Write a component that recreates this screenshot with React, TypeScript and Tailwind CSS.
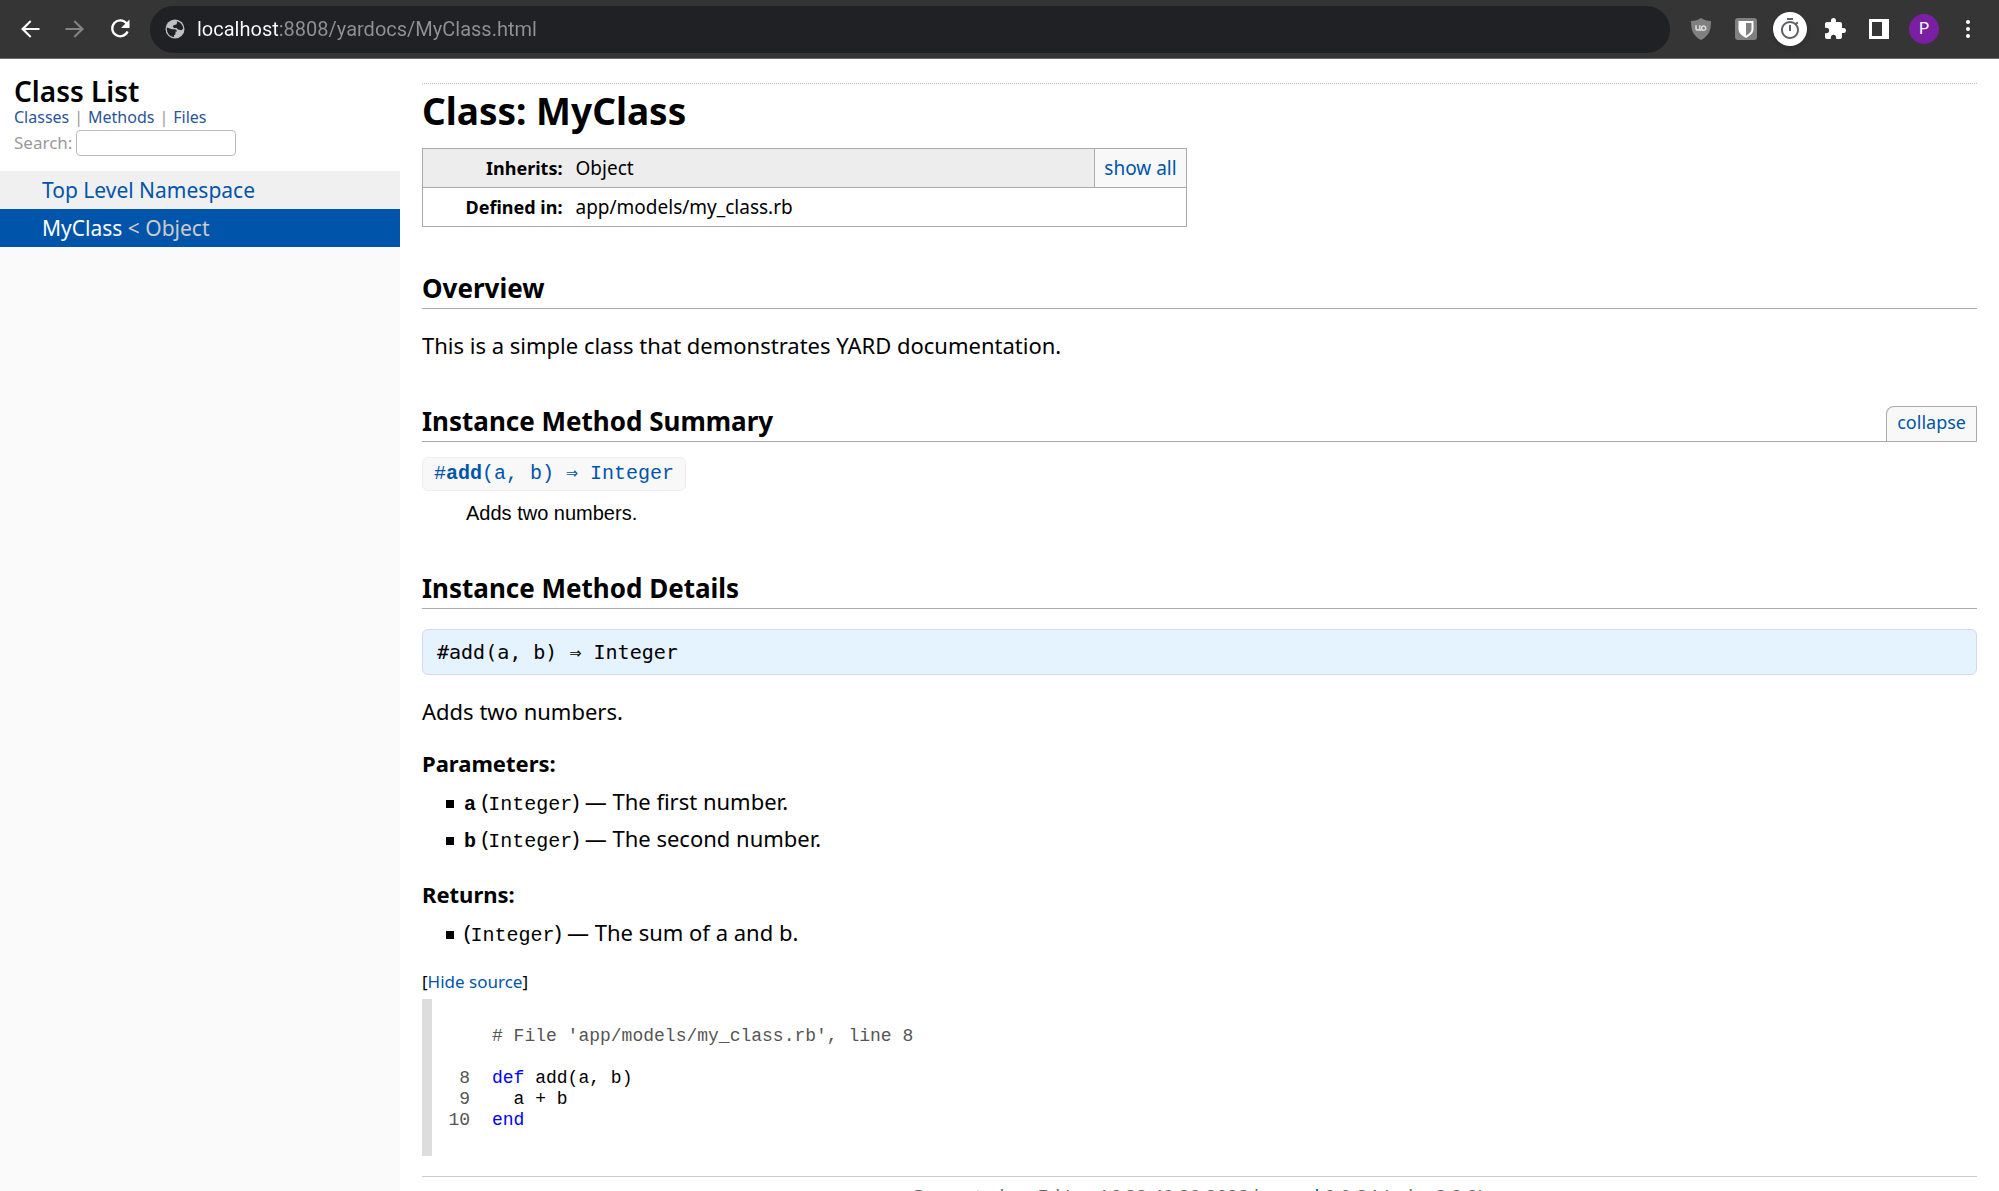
import type { ReactNode } from "react";

const classes = [
  { name: "Top Level Namespace", parent: "", active: false },
  { name: "MyClass", parent: "Object", active: true },
];

const source = [
  { line: "", code: "# File 'app/models/my_class.rb', line 8", kind: "comment" },
  { line: "", code: "", kind: "plain" },
  { line: "8", code: "add(a, b)", keyword: "def ", kind: "plain" },
  { line: "9", code: "  a + b", kind: "plain" },
  { line: "10", code: "", keyword: "end", kind: "plain" },
];

function UblockIcon() {
  return (
    <svg width="20" height="22" viewBox="0 0 20 22" fill="none">
      <path
        d="M10 0c3 2 6 3 10 3 0 9-2 15-10 19C2 18 0 12 0 3c4 0 7-1 10-3z"
        fill="#808080"
      />
      <path
        d="M5 7.200v3a1.900 1.900 0 0 0 3.800 0v-3M8.800 12.300h1.400M14.800 10.200a2.100 2.100 0 1 1-4.200 0 2.100 2.100 0 0 1 4.200 0z"
        stroke="#dedede"
        strokeWidth="1.500"
      />
    </svg>
  );
}

function BitwardenIcon() {
  return (
    <svg width="22" height="22" viewBox="0 0 22 22">
      <rect width="22" height="22" rx="3" fill="#808080" />
      <path d="M3.500 3h15v8c0 4-3 6.500-7.500 9-4.500-2.500-7.500-5-7.500-9z" fill="#fff" />
      <path d="M11 5h5.500v6c0 2.800-2 4.500-5.500 6.700z" fill="#808080" />
    </svg>
  );
}

function TimerIcon() {
  return (
    <svg width="24" height="24" viewBox="0 0 24 24" fill="#5f6368">
      <path d="M15 1H9v2h6V1zm-4 13h2V8h-2v6zm8.030-6.610 1.420-1.420c-.430-.510-.900-.990-1.410-1.410l-1.420 1.420C16.070 4.740 14.120 4 12 4c-4.970 0-9 4.030-9 9s4.020 9 9 9 9-4.030 9-9c0-2.120-.740-4.070-1.970-5.610zM12 20c-3.870 0-7-3.130-7-7s3.130-7 7-7 7 3.130 7 7-3.130 7-7 7z" />
    </svg>
  );
}

function PuzzleIcon() {
  return (
    <svg width="24" height="24" viewBox="0 0 24 24" fill="#fff">
      <path d="M20.500 11H19V7c0-1.100-.900-2-2-2h-4V3.500a2.500 2.500 0 0 0-5 0V5H4c-1.100 0-1.990.900-1.990 2v3.800H3.500c1.490 0 2.700 1.210 2.700 2.700s-1.210 2.700-2.700 2.700H2V20c0 1.100.900 2 2 2h3.800v-1.500c0-1.490 1.210-2.700 2.700-2.700s2.700 1.210 2.700 2.700V22H17c1.100 0 2-.900 2-2v-4h1.500a2.500 2.500 0 0 0 0-5z" />
    </svg>
  );
}

function PanelIcon() {
  return (
    <svg width="20" height="20" viewBox="0 0 20 20">
      <path fill="#fff" fillRule="evenodd" d="M0 0h20v20H0zM3 3v14h10V3z" />
    </svg>
  );
}

function GlobeIcon() {
  return (
    <svg width="20" height="20" viewBox="0 0 20 20">
      <circle cx="10" cy="10" r="9.500" fill="#bdc1c6" />
      <path
        d="M1.800 8.500 7 10.200h2.500c1.500 0 2.500 1 2.500 2.300h-1.500v2.300c0 1-1 1.200-1.500 1.500v1.800C5 17.800 1.500 14.500 1.800 8.500zM12 2.200c3.500.800 6 3.800 6.200 7.300l-1.700 1.800-3.500-.800c-.800-.800-1-1.500-2.500-1.500-1.300 0-2.500-.500-2.500-1.500S9 6 10 5.800c1.800 0 2-1 2-3.600z"
        fill="#202124"
      />
    </svg>
  );
}

function BrowserBar() {
  return (
    <header className="flex h-[59px] shrink-0 items-center border-b border-[#6b6b6b] bg-[#353535] pr-6 pl-[18px]">
      <div className="flex items-center gap-[21px]">
        <button type="button" aria-label="Back">
          <svg width="24" height="24" viewBox="0 0 24 24" fill="#fff">
            <path d="M21.500 11H7.200l6.200-6.300L12 3.200 3 12l9 8.800 1.400-1.500L7.200 13h14.300z" />
          </svg>
        </button>
        <button type="button" aria-label="Forward">
          <svg width="24" height="24" viewBox="0 0 24 24" fill="#838383">
            <path d="M2.500 11h14.300l-6.200-6.300L12 3.200 21 12l-9 8.800-1.400-1.500 6.200-6.300H2.500z" />
          </svg>
        </button>
        <button type="button" aria-label="Reload">
          <svg width="24" height="24" viewBox="0 0 24 24">
            <path
              d="M18.500 6.300A8 8 0 1 0 19.600 14.500"
              fill="none"
              stroke="#fff"
              strokeWidth="2.300"
            />
            <path d="M21.500 2.500V11H13z" fill="#fff" />
          </svg>
        </button>
      </div>
      <div className="ml-[18px] flex h-[47px] min-w-0 flex-1 items-center gap-3 rounded-full bg-[#202124] pl-[15px]">
        <GlobeIcon />
        <input
          type="text"
          aria-label="Address"
          className="min-w-0 flex-1 bg-[linear-gradient(90deg,#fff_83px,#8f9194_83px)] bg-clip-text font-['Roboto',sans-serif] text-xl text-transparent outline-none"
          defaultValue="localhost:8808/yardocs/MyClass.html"
        />
      </div>
      <div className="flex items-center pl-[21px]">
        <button type="button" aria-label="uBlock" className="mr-6">
          <UblockIcon />
        </button>
        <button type="button" aria-label="Bitwarden" className="mr-4">
          <BitwardenIcon />
        </button>
        <button
          type="button"
          aria-label="Timer"
          className="mr-4 flex size-[34px] items-center justify-center rounded-full bg-white shadow-md"
        >
          <TimerIcon />
        </button>
        <button type="button" aria-label="Extensions" className="mr-[22px]">
          <PuzzleIcon />
        </button>
        <button type="button" aria-label="Side panel" className="mr-5">
          <PanelIcon />
        </button>
        <button
          type="button"
          aria-label="Profile"
          className="mr-[22px] size-[30px] rounded-full bg-[#7b1fa2] font-['Roboto',sans-serif] text-base text-white"
        >
          P
        </button>
        <button type="button" aria-label="Menu">
          <svg width="14" height="20" viewBox="0 0 14 20" fill="#fff">
            <circle cx="7" cy="3" r="2" />
            <circle cx="7" cy="10" r="2" />
            <circle cx="7" cy="17" r="2" />
          </svg>
        </button>
      </div>
    </header>
  );
}

function Sidebar() {
  return (
    <nav className="flex w-[400px] shrink-0 flex-col bg-[#fafafa]">
      <div className="bg-white px-[14px] pt-4 pb-[15px]">
        <h1 className="text-[28px] leading-8 font-semibold">Class List</h1>
        <div className="flex gap-[5px] text-base leading-5 text-[#999]">
          <a href="#classes" className="text-[#2a559a]">Classes</a>
          <span>|</span>
          <a href="#methods" className="text-[#2a559a]">Methods</a>
          <span>|</span>
          <a href="#files" className="text-[#2a559a]">Files</a>
        </div>
        <div className="mt-[3px] flex items-center gap-1 text-[17px] leading-[26px] text-[#999]">
          <label htmlFor="search">Search:</label>
          <input
            id="search"
            type="text"
            className="h-[26px] w-[160px] rounded border border-[#bbb] bg-white px-1"
          />
        </div>
      </div>
      <ul>
        {classes.map((item) => (
          <li
            key={item.name}
            className={
              item.active
                ? "bg-[#05a] px-[42px] text-[21px] leading-[38px] text-[#ccc]"
                : "bg-[#f0f0f0] px-[42px] text-[21px] leading-[38px]"
            }
          >
            <a href={`#${item.name}`} className={item.active ? "text-white" : "text-[#05a]"}>
              {item.name}
            </a>
            {item.parent && <span> &lt; {item.parent}</span>}
          </li>
        ))}
      </ul>
    </nav>
  );
}

function SectionTitle({ children, action }: { children: string; action?: string }) {
  return (
    <div className="mt-[45px] flex items-end justify-between border-b border-[#aaa]">
      <h2 className="pb-1 text-[26px] leading-8 font-bold">{children}</h2>
      {action && (
        <a
          href="#summary"
          className="rounded-tl-lg border border-b-0 border-[#aaa] bg-[#f8f8f8] px-[10px] pb-1 text-lg leading-[30px] text-[#05a]"
        >
          {action}
        </a>
      )}
    </div>
  );
}

function Tag({ name, desc }: { name?: string; desc: string }) {
  return (
    <li className="flex h-[37px] items-center">
      <span className="mt-1 mr-[10px] size-2 bg-black" />
      <span>
        {name && (
          <strong className="font-['Liberation_Mono',monospace] text-xl">{name}</strong>
        )}
        {name && " "}
        (<code className="font-['Liberation_Mono',monospace] text-xl">Integer</code>) — {desc}
      </span>
    </li>
  );
}

function TagList({ title, children }: { title: string; children: ReactNode }) {
  return (
    <section className="mt-[17px]">
      <h3 className="leading-10 font-bold">{title}</h3>
      <ul className="pl-6">{children}</ul>
    </section>
  );
}

function Content() {
  return (
    <main className="min-w-0 flex-1 px-[22px] pt-6 text-[22px]">
      <div className="border-t border-dotted border-[#bbb]" />
      <h1 className="mt-1 text-[37px] leading-[46px] font-bold">Class: MyClass</h1>
      <table className="mt-[14px] w-[765px] border-collapse border border-[#aaa] text-[19px]">
        <tbody>
          <tr className="h-[39px] border-b border-[#aaa] bg-[#ededed]">
            <th scope="row" className="w-[140px] text-right text-lg font-bold">Inherits:</th>
            <td className="pl-[13px]">Object</td>
            <td className="w-[92px] border-l border-[#aaa] bg-[#f8f8f8] text-center">
              <a href="#tree" className="text-[#05a]">show all</a>
            </td>
          </tr>
          <tr className="h-[39px]">
            <th scope="row" className="text-right text-lg font-bold">Defined in:</th>
            <td colSpan={2} className="pl-[13px]">app/models/my_class.rb</td>
          </tr>
        </tbody>
      </table>

      <SectionTitle>Overview</SectionTitle>
      <p className="mt-[21px] leading-[30px]">
        This is a simple class that demonstrates YARD documentation.
      </p>

      <SectionTitle action="collapse">Instance Method Summary</SectionTitle>
      <a
        href="#add"
        className="mt-[15px] block w-fit rounded-md border border-[#eee] bg-[#f8f8f8] px-[11px] font-['Liberation_Mono',monospace] text-xl leading-8 text-[#05a]"
      >
        #<strong>add</strong>(a, b) ⇒ Integer
      </a>
      <p className="mt-2 pl-11 font-['Liberation_Sans',sans-serif] text-xl leading-7">
        Adds two numbers.
      </p>

      <SectionTitle>Instance Method Details</SectionTitle>
      <div
        id="add"
        className="mt-5 rounded-md border border-[#d8d8e5] bg-[#e5f2ff] px-[14px] font-['DejaVu_Sans_Mono',monospace] text-xl leading-[44px]"
      >
        #add(a, b) ⇒ Integer
      </div>
      <p className="mt-[21px] leading-[30px]">Adds two numbers.</p>

      <TagList title="Parameters:">
        <Tag name="a" desc="The first number." />
        <Tag name="b" desc="The second number." />
      </TagList>
      <TagList title="Returns:">
        <Tag desc="The sum of a and b." />
      </TagList>

      <div className="mt-[19px] text-[17px] leading-6">
        [<a href="#source" className="text-[#05a]">Hide source</a>]
      </div>
      <pre className="mt-[5px] border-l-[10px] border-[#ddd] pt-[27px] pb-[25px] font-['Liberation_Mono',monospace] text-lg leading-[21px]">
        {source.map((row, i) => (
          <div key={i} className="flex h-[21px]">
            <span className="w-[38px] text-right text-[#555]">{row.line}</span>
            <code
              className={
                row.kind === "comment"
                  ? "pl-[22px] font-['Liberation_Mono',monospace] text-[#555]"
                  : "pl-[22px] font-['Liberation_Mono',monospace]"
              }
            >
              {row.keyword && <span className="text-[#00f]">{row.keyword}</span>}
              {row.code}
            </code>
          </div>
        ))}
      </pre>
      <footer className="mt-5 border-t border-[#ccc] pt-[10px] text-center text-[19px] leading-5 text-[#666]">
        Generated on Fri Jun 16 22:48:20 2023 by{" "}
        <a href="#yard" className="text-[#05a]">yard</a> 0.9.34 (ruby-3.2.2).
      </footer>
    </main>
  );
}

export default function App() {
  return (
    <div className="flex h-screen flex-col overflow-hidden bg-white font-['Noto_Sans',sans-serif] text-black">
      <BrowserBar />
      <div className="flex min-h-0 flex-1">
        <Sidebar />
        <Content />
      </div>
    </div>
  );
}
